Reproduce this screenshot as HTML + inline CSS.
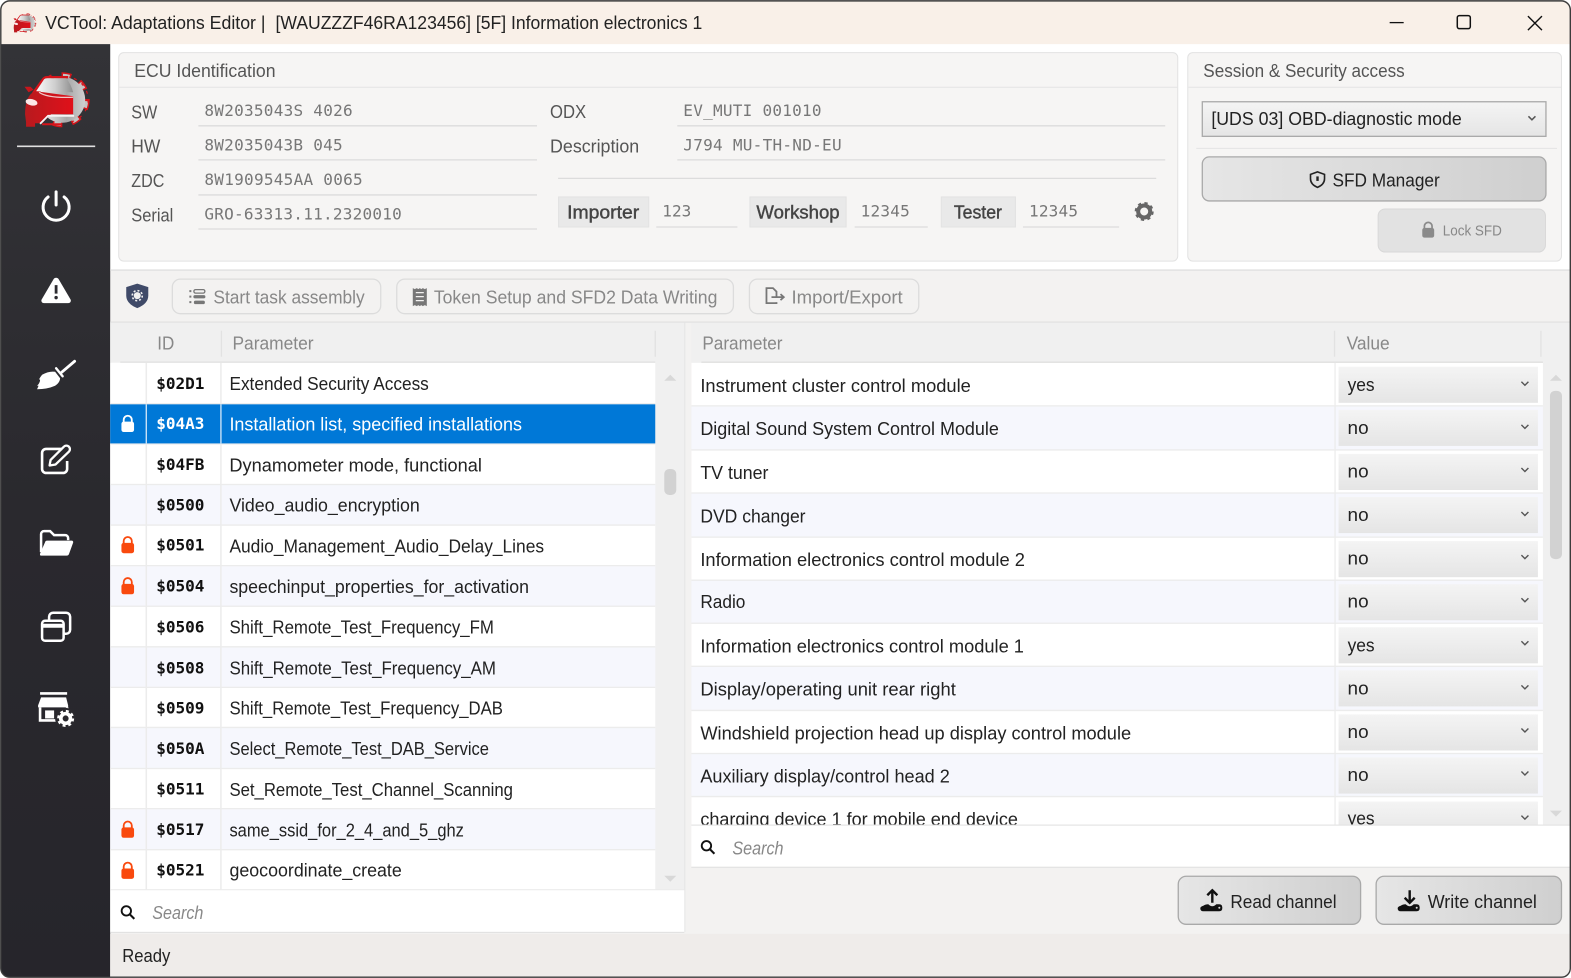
<!DOCTYPE html>
<html lang="en"><head><meta charset="utf-8"><title>VCTool: Adaptations Editor</title>
<style>
html,body{margin:0;padding:0;background:#fff;width:1571px;height:978px;overflow:hidden}
svg{display:block}
text{font-family:"Liberation Sans",sans-serif;font-size:18px;fill:#222;white-space:pre}
.l{fill:#555}
.m{font-family:"DejaVu Sans Mono","Liberation Mono",monospace;font-size:16px;fill:#777}
.i{font-family:"DejaVu Sans Mono","Liberation Mono",monospace;font-size:16px;font-weight:bold;fill:#111}
.g{fill:#888}
.s{fill:#888;font-style:italic}
.b{fill:#444;font-weight:normal;stroke:#444;stroke-width:.4}
</style></head><body>
<svg xmlns="http://www.w3.org/2000/svg" width="1571" height="978" viewBox="0 0 1568 976">
<defs>
<linearGradient id="cb" x1="0" y1="0" x2="0" y2="1"><stop offset="0" stop-color="#f4f4f4"/><stop offset="1" stop-color="#e5e5e5"/></linearGradient>
<linearGradient id="bt" x1="0" y1="0" x2="1" y2="0"><stop offset="0" stop-color="#e6e6e6"/><stop offset="1" stop-color="#cfcfcf"/></linearGradient>
<linearGradient id="sd" x1="0" y1="0" x2="0" y2="1"><stop offset="0" stop-color="#333337"/><stop offset=".5" stop-color="#2a292e"/><stop offset="1" stop-color="#26252b"/></linearGradient>
<linearGradient id="sv" x1="0" y1="0" x2="1" y2="0"><stop offset="0" stop-color="#f8f8f8"/><stop offset=".6" stop-color="#a8a8a8"/><stop offset="1" stop-color="#d0d0d0"/></linearGradient>
<linearGradient id="sw" x1="0" y1="0" x2="1" y2="0"><stop offset="0" stop-color="#fafafa"/><stop offset=".5" stop-color="#d0d0d0"/><stop offset="1" stop-color="#8e8e8e"/></linearGradient>
<linearGradient id="rd" x1="0" y1="0" x2="1" y2="0"><stop offset="0" stop-color="#b81a1e"/><stop offset="1" stop-color="#e0101a"/></linearGradient>
<symbol id="logo" viewBox="23 72 66 56" overflow="visible">
<circle cx="62" cy="99.500" r="24" fill="none" stroke="#d5141a" stroke-width="7" pathLength="80" stroke-dasharray="5 5"/>
<circle cx="62" cy="99.500" r="24" fill="none" stroke="#c4c4c4" stroke-width="4" pathLength="80" stroke-dasharray="3.500 6.500" stroke-dashoffset="-0.750"/>
<circle cx="62" cy="99.500" r="23" fill="url(#sv)"/>
<path d="M65 76.500a23 23 0 0 1 0 46" fill="none" stroke="#d5141a" stroke-width="1.200" stroke-dasharray="3 6"/>
<path d="M33 93L43 79q1.500-2 4-2H68" fill="none" stroke="#d5141a" stroke-width="2.400"/>
<path d="M36 91l8-12q1-1 3-1H66q5 6 7 14z" fill="url(#sw)"/>
<path d="M27 100q3-8 9-9l37 5V114H51l-9 9H35v3.500H26V122l-1-8q0-8 2-14z" fill="url(#rd)"/>
<path d="M39 92q8 6 34 5" fill="none" stroke="#f0c8c8" stroke-width="1.300"/>
<path d="M24.500 86.500h6l3 3-5 2.500z" fill="#c8161c"/>
<path d="M40 123.500l8-8H74" fill="none" stroke="#f5f5f5" stroke-width="1.800"/>
<ellipse cx="31.500" cy="102" rx="6" ry="3.200" transform="rotate(12 31.500 102)" fill="#fde8e8"/>
<path d="M42 124H62" stroke="#d5141a" stroke-width="2"/>
</symbol>
<symbol id="lock" viewBox="0 0 16 20" overflow="visible"><path d="M3.500 8V5.500a4.500 4.500 0 0 1 9 0V8" fill="none" stroke="currentColor" stroke-width="2"/><rect x="1" y="7.500" width="14" height="11.500" rx="2.500" fill="currentColor"/></symbol>
<symbol id="mag" viewBox="0 0 16 16" overflow="visible"><circle cx="6.500" cy="6.500" r="5" fill="none" stroke="#111" stroke-width="2"/><path d="M10.500 10.500l4.500 4.500" stroke="#111" stroke-width="2.200"/></symbol>
<clipPath id="rc"><rect x="690" y="362" width="878" height="461"/></clipPath>
</defs>

<!-- window -->
<rect x="0" y="0" width="1568" height="976" rx="9" fill="#f3f2f1"/>
<path d="M1 44V9a8 8 0 0 1 8-8H1559a8 8 0 0 1 8 8V44z" fill="#f9f0e8"/>
<rect x="110" y="44" width="1458" height="225" fill="#fff"/>
<path d="M1 44H110V975H9a8 8 0 0 1-8-8z" fill="url(#sd)"/>

<!-- title -->
<use href="#logo" x="13" y="13" width="23" height="20"/>
<text x="45" y="29" textLength="220" lengthAdjust="spacingAndGlyphs">VCTool: Adaptations Editor |</text>
<text x="275" y="29" textLength="426" lengthAdjust="spacingAndGlyphs">[WAUZZZF46RA123456] [5F] Information electronics 1</text>
<path d="M1387 22.500h14" stroke="#111" stroke-width="1.300"/>
<rect x="1454.500" y="15.500" width="13" height="13" rx="2" fill="none" stroke="#111" stroke-width="1.500"/>
<path d="M1525 16l14 14M1539 16l-14 14" stroke="#111" stroke-width="1.400"/>

<!-- ECU group -->
<rect x="118.500" y="52.500" width="1057" height="208" rx="5" fill="#f6f5f4" stroke="#e2e2e2"/>
<path d="M119 87H1175" stroke="#e3e3e3"/>
<text class="l" x="134" y="76.700" textLength="141" lengthAdjust="spacingAndGlyphs">ECU Identification</text>
<text class="l" x="131" y="118" textLength="26" lengthAdjust="spacingAndGlyphs">SW</text>
<text class="l" x="131" y="152" textLength="29" lengthAdjust="spacingAndGlyphs">HW</text>
<text class="l" x="131" y="186.500" textLength="33" lengthAdjust="spacingAndGlyphs">ZDC</text>
<text class="l" x="131" y="221" textLength="42" lengthAdjust="spacingAndGlyphs">Serial</text>
<text class="m" x="204" y="115.500" textLength="148">8W2035043S 4026</text>
<text class="m" x="204" y="150" textLength="138">8W2035043B 045</text>
<text class="m" x="204" y="184.500" textLength="158">8W1909545AA 0065</text>
<text class="m" x="204" y="219" textLength="197">GRO-63313.11.2320010</text>
<path d="M198 125.500H536M198 159.500H536M198 194.500H536M198 228.500H536M676 125.500H1163M676 159.500H1163M557 178H1154" stroke="#dcdcdc" stroke-width="1.300"/>
<text class="l" x="549" y="117.700" textLength="36" lengthAdjust="spacingAndGlyphs">ODX</text>
<text class="l" x="549" y="152.300" textLength="89" lengthAdjust="spacingAndGlyphs">Description</text>
<text class="m" x="682" y="115.500" textLength="138">EV_MUTI 001010</text>
<text class="m" x="682" y="150" textLength="158">J794 MU-TH-ND-EU</text>
<rect x="557.500" y="196.500" width="90" height="30" fill="#e9e9e9" stroke="#e2e2e2"/>
<rect x="748.500" y="196.500" width="96" height="30" fill="#e9e9e9" stroke="#e2e2e2"/>
<rect x="939.500" y="196.500" width="74" height="30" fill="#e9e9e9" stroke="#e2e2e2"/>
<text class="b" x="566" y="218" textLength="72" lengthAdjust="spacingAndGlyphs">Importer</text>
<text class="b" x="755" y="218" textLength="83" lengthAdjust="spacingAndGlyphs">Workshop</text>
<text class="b" x="952" y="218" textLength="48" lengthAdjust="spacingAndGlyphs">Tester</text>
<text class="m" x="661" y="216" textLength="29">123</text>
<text class="m" x="859" y="216" textLength="49">12345</text>
<text class="m" x="1027" y="216" textLength="49">12345</text>
<path d="M655 226.500H736M853 226.500H926M1021 226.500H1117" stroke="#dcdcdc" stroke-width="1.300"/>
<g transform="translate(1142 211)"><circle r="6" fill="none" stroke="#666" stroke-width="4"/><circle r="8" fill="none" stroke="#666" stroke-width="3" stroke-dasharray="3.100 3.180"/></g>

<!-- Session group -->
<rect x="1185.500" y="52.500" width="373" height="208" rx="5" fill="#f6f5f4" stroke="#e2e2e2"/>
<path d="M1186 87H1558M1194 148H1554" stroke="#e3e3e3"/>
<text class="l" x="1201" y="76.700" textLength="201" lengthAdjust="spacingAndGlyphs">Session &amp; Security access</text>
<rect x="1200" y="101.500" width="343" height="34.500" fill="url(#cb)" stroke="#a9a9a9" stroke-width="1.300"/>
<text x="1209" y="124.700" textLength="250" lengthAdjust="spacingAndGlyphs">[UDS 03] OBD-diagnostic mode</text>
<path d="M1525.500 116l3.500 3.500 3.500-3.500" fill="none" stroke="#555" stroke-width="1.500"/>
<rect x="1200" y="156.500" width="343" height="44" rx="7" fill="url(#bt)" stroke="#a9a9a9" stroke-width="1.300"/>
<path d="M1315 171.500l7 2.500v4.500q0 5.500-7 8.500q-7-3-7-8.500V174z" fill="none" stroke="#222" stroke-width="1.600"/><path d="M1315 176v4.500" stroke="#222" stroke-width="2.400"/>
<text x="1330" y="186" textLength="107" lengthAdjust="spacingAndGlyphs">SFD Manager</text>
<rect x="1375.500" y="208.500" width="167" height="43" rx="7" fill="#e2e2e2" stroke="#d8d8d8"/>
<use href="#lock" x="1418.500" y="221" width="14" height="17" color="#8a8a8a"/>
<text class="g" x="1440" y="235" style="font-size:15px" textLength="59" lengthAdjust="spacingAndGlyphs">Lock SFD</text>

<!-- toolbar -->
<path d="M110 269.500H1568M110 321.500H1568" stroke="#e0e0e0" stroke-width="1.300"/>
<path d="M137 283l11 3.500v8.500q0 8-11 12.500q-11-4.500-11-12.500v-8.500z" fill="#3f4a68"/>
<circle cx="137" cy="295" r="3.500" fill="#f1f1f1"/><circle cx="137" cy="295" r="5" fill="none" stroke="#f1f1f1" stroke-width="1.600" stroke-dasharray="2 1.930"/>
<rect x="172" y="278.500" width="208" height="34.500" rx="8" fill="#f3f2f1" stroke="#dcdcdc" stroke-width="1.300"/>
<rect x="396" y="278.500" width="336" height="34.500" rx="8" fill="#f3f2f1" stroke="#dcdcdc" stroke-width="1.300"/>
<rect x="748" y="278.500" width="169" height="34.500" rx="8" fill="#f3f2f1" stroke="#dcdcdc" stroke-width="1.300"/>
<path d="M189 290.500h2M189 296h2M189 301.500h2" stroke="#777" stroke-width="2"/><rect x="193.500" y="289" width="11" height="3.500" rx="1.700" fill="none" stroke="#777" stroke-width="1.300"/><rect x="193" y="294.500" width="12" height="3.200" rx="1.600" fill="#777"/><rect x="193.500" y="300" width="11" height="3.500" rx="1.700" fill="#777"/>
<text class="g" x="213" y="303" textLength="151" lengthAdjust="spacingAndGlyphs">Start task assembly</text>
<path d="M412 287.500l2 1 2-1 1.500 1 1.500-1 1.500 1 1.500-1 2 1 2-1v18l-2-1-2 1-1.500-1-1.500 1-1.500-1-1.500 1-2-1-2 1z" fill="#777"/><path d="M415 292h8M415 296h8M415 300h8" stroke="#f3f2f1" stroke-width="1.300"/>
<text class="g" x="433" y="303" textLength="283" lengthAdjust="spacingAndGlyphs">Token Setup and SFD2 Data Writing</text>
<path d="M775 297v-6l-3.500-3.500H765v15h10v-1" fill="none" stroke="#777" stroke-width="1.800"/><path d="M770 296.500h12m-3-3l3.300 3-3.300 3" fill="none" stroke="#777" stroke-width="1.800"/>
<text class="g" x="790" y="303" textLength="111" lengthAdjust="spacingAndGlyphs">Import/Export</text>

<!-- left table -->
<rect x="110" y="322" width="573" height="40" fill="#f0f0f0"/>
<rect x="654" y="362" width="29" height="526" fill="#f0f0f0"/>
<rect x="683" y="322" width="7" height="610" fill="#f3f2f1"/>
<path d="M683.500 322V930" stroke="#e4e4e4"/>
<path d="M120 361.500H654" stroke="#ddd" stroke-width="1.300"/><path d="M221 330V356M654 330V356" stroke="#e2e2e2" stroke-width="1.300"/>
<text class="g" x="157" y="349" textLength="17" lengthAdjust="spacingAndGlyphs">ID</text>
<text class="g" x="232" y="349" textLength="81" lengthAdjust="spacingAndGlyphs">Parameter</text>

<rect x="110" y="362" width="544" height="41" fill="#fff"/>
<rect x="110" y="443" width="544" height="40.500" fill="#fff"/>
<rect x="110" y="483.500" width="544" height="40.500" fill="#f6f7fd"/>
<rect x="110" y="524" width="544" height="40.500" fill="#fff"/>
<rect x="110" y="564.500" width="544" height="40.500" fill="#f6f7fd"/>
<rect x="110" y="605" width="544" height="40.500" fill="#fff"/>
<rect x="110" y="645.500" width="544" height="40.500" fill="#f6f7fd"/>
<rect x="110" y="686" width="544" height="40" fill="#fff"/>
<rect x="110" y="726" width="544" height="41" fill="#f6f7fd"/>
<rect x="110" y="767" width="544" height="40" fill="#fff"/>
<rect x="110" y="807" width="544" height="41" fill="#f6f7fd"/>
<rect x="110" y="848" width="544" height="40" fill="#fff"/>
<path d="M110 403H654M110 443H654M110 483.500H654M110 524H654M110 564.500H654M110 605H654M110 645.500H654M110 686H654M110 726H654M110 767H654M110 807H654M110 848H654M110 888H683" stroke="#ececec" stroke-width="1.300"/>
<path d="M146 362V888M220.500 362V888" stroke="#ececec" stroke-width="1.500"/>
<rect x="110" y="403.500" width="544" height="39" fill="#0078d7"/>
<path d="M146 403.500V442.500M220.500 403.500V442.500" stroke="#d5e8f8" stroke-width="1.300"/>

<g>
<text class="i" x="156" y="388" textLength="48">$02D1</text><text x="229" y="389" textLength="199" lengthAdjust="spacingAndGlyphs">Extended Security Access</text>
<text class="i" x="156" y="428" textLength="48" style="fill:#fff">$04A3</text><text x="229" y="429.500" textLength="292" lengthAdjust="spacingAndGlyphs" style="fill:#fff">Installation list, specified installations</text>
<text class="i" x="156" y="469" textLength="48">$04FB</text><text x="229" y="470.500" textLength="252" lengthAdjust="spacingAndGlyphs">Dynamometer mode, functional</text>
<text class="i" x="156" y="509.500" textLength="48">$0500</text><text x="229" y="510.700" textLength="190" lengthAdjust="spacingAndGlyphs">Video_audio_encryption</text>
<text class="i" x="156" y="549.500" textLength="48">$0501</text><text x="229" y="551.500" textLength="314" lengthAdjust="spacingAndGlyphs">Audio_Management_Audio_Delay_Lines</text>
<text class="i" x="156" y="590.500" textLength="48">$0504</text><text x="229" y="591.700" textLength="299" lengthAdjust="spacingAndGlyphs">speechinput_properties_for_activation</text>
<text class="i" x="156" y="631" textLength="48">$0506</text><text x="229" y="632" textLength="264" lengthAdjust="spacingAndGlyphs">Shift_Remote_Test_Frequency_FM</text>
<text class="i" x="156" y="672" textLength="48">$0508</text><text x="229" y="673" textLength="266" lengthAdjust="spacingAndGlyphs">Shift_Remote_Test_Frequency_AM</text>
<text class="i" x="156" y="712" textLength="48">$0509</text><text x="229" y="713.300" textLength="273" lengthAdjust="spacingAndGlyphs">Shift_Remote_Test_Frequency_DAB</text>
<text class="i" x="156" y="752.500" textLength="48">$050A</text><text x="229" y="753.700" textLength="259" lengthAdjust="spacingAndGlyphs">Select_Remote_Test_DAB_Service</text>
<text class="i" x="156" y="793" textLength="48">$0511</text><text x="229" y="794.300" textLength="283" lengthAdjust="spacingAndGlyphs">Set_Remote_Test_Channel_Scanning</text>
<text class="i" x="156" y="833.500" textLength="48">$0517</text><text x="229" y="834.700" textLength="234" lengthAdjust="spacingAndGlyphs">same_ssid_for_2_4_and_5_ghz</text>
<text class="i" x="156" y="874" textLength="48">$0521</text><text x="229" y="875" textLength="172" lengthAdjust="spacingAndGlyphs">geocoordinate_create</text>
</g>
<use href="#lock" x="120" y="414" width="15" height="18" color="#fff"/>
<use href="#lock" x="120" y="535" width="15" height="18" color="#f9490e"/>
<use href="#lock" x="120" y="576" width="15" height="18" color="#f9490e"/>
<use href="#lock" x="120" y="819" width="15" height="18" color="#f9490e"/>
<use href="#lock" x="120" y="860" width="15" height="18" color="#f9490e"/>
<path d="M663 380l6-6 6 6z" fill="#d8d8d8"/><path d="M663 874l6 6 6-6z" fill="#d8d8d8"/>
<rect x="663" y="468" width="12" height="26" rx="5" fill="#d2d2d2"/>
<rect x="110" y="888.500" width="573" height="41.500" fill="#fff"/>
<path d="M110 930.500H683" stroke="#e0e0e0"/>
<use href="#mag" x="120" y="903" width="15" height="15"/>
<text class="s" x="152" y="917" textLength="51" lengthAdjust="spacingAndGlyphs">Search</text>

<!-- right table -->
<rect x="690" y="322" width="878" height="40" fill="#f0f0f0"/>
<rect x="1540" y="362" width="28" height="461" fill="#f0f0f0"/>
<path d="M700 361.500H1540" stroke="#ddd" stroke-width="1.300"/><path d="M1332 330V356M1538 330V356" stroke="#e2e2e2" stroke-width="1.300"/>
<text class="g" x="701" y="349" textLength="80" lengthAdjust="spacingAndGlyphs">Parameter</text>
<text class="g" x="1344" y="349" textLength="43" lengthAdjust="spacingAndGlyphs">Value</text>
<g clip-path="url(#rc)">
<rect x="690" y="362" width="850" height="43" fill="#fff"/>
<rect x="690" y="405" width="850" height="44" fill="#f6f7fd"/>
<rect x="690" y="449" width="850" height="43" fill="#fff"/>
<rect x="690" y="492" width="850" height="44" fill="#f6f7fd"/>
<rect x="690" y="536" width="850" height="43" fill="#fff"/>
<rect x="690" y="579" width="850" height="43" fill="#f6f7fd"/>
<rect x="690" y="622" width="850" height="43" fill="#fff"/>
<rect x="690" y="665" width="850" height="44" fill="#f6f7fd"/>
<rect x="690" y="709" width="850" height="43" fill="#fff"/>
<rect x="690" y="752" width="850" height="43" fill="#f6f7fd"/>
<rect x="690" y="795" width="850" height="44" fill="#fff"/>
<path d="M690 405H1540M690 449H1540M690 492H1540M690 536H1540M690 579H1540M690 622H1540M690 665H1540M690 709H1540M690 752H1540M690 795H1540M1332.500 362V823" stroke="#ececec" stroke-width="1.300"/>
<rect x="1336" y="366" width="199" height="36" fill="url(#cb)"/>
<rect x="1336" y="409" width="199" height="36" fill="url(#cb)"/>
<rect x="1336" y="453" width="199" height="36" fill="url(#cb)"/>
<rect x="1336" y="496" width="199" height="36" fill="url(#cb)"/>
<rect x="1336" y="540" width="199" height="36" fill="url(#cb)"/>
<rect x="1336" y="583" width="199" height="36" fill="url(#cb)"/>
<rect x="1336" y="626" width="199" height="36" fill="url(#cb)"/>
<rect x="1336" y="669" width="199" height="36" fill="url(#cb)"/>
<rect x="1336" y="713" width="199" height="36" fill="url(#cb)"/>
<rect x="1336" y="756" width="199" height="36" fill="url(#cb)"/>
<rect x="1336" y="800" width="199" height="36" fill="url(#cb)"/>
<path d="M1518.500 381l3.500 3.500 3.500-3.500M1518.500 424l3.500 3.500 3.500-3.500M1518.500 467l3.500 3.500 3.500-3.500M1518.500 511l3.500 3.500 3.500-3.500M1518.500 554l3.500 3.500 3.500-3.500M1518.500 597l3.500 3.500 3.500-3.500M1518.500 640l3.500 3.500 3.500-3.500M1518.500 684l3.500 3.500 3.500-3.500M1518.500 727l3.500 3.500 3.500-3.500M1518.500 770l3.500 3.500 3.500-3.500M1518.500 814l3.500 3.500 3.500-3.500" fill="none" stroke="#555" stroke-width="1.400"/>
<text x="699" y="391" textLength="270" lengthAdjust="spacingAndGlyphs">Instrument cluster control module</text>
<text x="699" y="434" textLength="298" lengthAdjust="spacingAndGlyphs">Digital Sound System Control Module</text>
<text x="699" y="478" textLength="68" lengthAdjust="spacingAndGlyphs">TV tuner</text>
<text x="699" y="521.300" textLength="105" lengthAdjust="spacingAndGlyphs">DVD changer</text>
<text x="699" y="565" textLength="324" lengthAdjust="spacingAndGlyphs">Information electronics control module 2</text>
<text x="699" y="607" textLength="45" lengthAdjust="spacingAndGlyphs">Radio</text>
<text x="699" y="651" textLength="323" lengthAdjust="spacingAndGlyphs">Information electronics control module 1</text>
<text x="699" y="694" textLength="255" lengthAdjust="spacingAndGlyphs">Display/operating unit rear right</text>
<text x="699" y="738" textLength="430" lengthAdjust="spacingAndGlyphs">Windshield projection head up display control module</text>
<text x="699" y="781" textLength="249" lengthAdjust="spacingAndGlyphs">Auxiliary display/control head 2</text>
<text x="699" y="824" textLength="317" lengthAdjust="spacingAndGlyphs">charging device 1 for mobile end device</text>
<text x="1345" y="390" textLength="27" lengthAdjust="spacingAndGlyphs">yes</text>
<text x="1345" y="433" textLength="21" lengthAdjust="spacingAndGlyphs">no</text>
<text x="1345" y="476.500" textLength="21" lengthAdjust="spacingAndGlyphs">no</text>
<text x="1345" y="520" textLength="21" lengthAdjust="spacingAndGlyphs">no</text>
<text x="1345" y="563.500" textLength="21" lengthAdjust="spacingAndGlyphs">no</text>
<text x="1345" y="606.500" textLength="21" lengthAdjust="spacingAndGlyphs">no</text>
<text x="1345" y="650" textLength="27" lengthAdjust="spacingAndGlyphs">yes</text>
<text x="1345" y="693" textLength="21" lengthAdjust="spacingAndGlyphs">no</text>
<text x="1345" y="736.500" textLength="21" lengthAdjust="spacingAndGlyphs">no</text>
<text x="1345" y="779.500" textLength="21" lengthAdjust="spacingAndGlyphs">no</text>
<text x="1345" y="823" textLength="27" lengthAdjust="spacingAndGlyphs">yes</text>
</g>
<path d="M1547 380l6-6 6 6z" fill="#d8d8d8"/><path d="M1547 809l6 6 6-6z" fill="#d8d8d8"/>
<rect x="1547" y="390" width="12" height="168" rx="5" fill="#d2d2d2"/>
<rect x="690" y="823.500" width="878" height="41.500" fill="#fff"/>
<path d="M690 823.500H1568M690 865.500H1568" stroke="#e0e0e0"/>
<use href="#mag" x="699" y="838" width="15" height="15"/>
<text class="s" x="731" y="852.700" textLength="51" lengthAdjust="spacingAndGlyphs">Search</text>

<!-- bottom buttons -->
<rect x="1176" y="874.500" width="182" height="48" rx="8" fill="url(#bt)" stroke="#a9a9a9" stroke-width="1.300"/>
<rect x="1373.500" y="874.500" width="185" height="48" rx="8" fill="url(#bt)" stroke="#a9a9a9" stroke-width="1.300"/>
<path d="M1210 901v-12m-5 4.500l5-5 5 5" fill="none" stroke="#111" stroke-width="2.400"/>
<path d="M1201 904q2-1.500 5-1.500 2 2 4 2t4-2h3q3 0 3 3.500t-3 3.500h-16q-3 0-3-3 0-1.500 3-2.500z" fill="#111"/><circle cx="1217" cy="906" r="1" fill="#ddd"/>
<text x="1228" y="906" textLength="106" lengthAdjust="spacingAndGlyphs">Read channel</text>
<path d="M1407 888.500v12m-5-4.500l5 5 5-5" fill="none" stroke="#111" stroke-width="2.400"/>
<path d="M1398 904q2-1.500 5-1.500 2 2 4 2t4-2h3q3 0 3 3.500t-3 3.500h-16q-3 0-3-3 0-1.500 3-2.500z" fill="#111"/><circle cx="1414" cy="906" r="1" fill="#ddd"/>
<text x="1425" y="906" textLength="109" lengthAdjust="spacingAndGlyphs">Write channel</text>

<!-- status -->
<path d="M110 932H1567V967a8 8 0 0 1-8 8H110z" fill="#efecea"/>
<text x="122" y="960" textLength="48" lengthAdjust="spacingAndGlyphs">Ready</text>

<!-- sidebar -->
<use href="#logo" x="23" y="72" width="66" height="56"/>
<path d="M17 146H95" stroke="#e0e0e0" stroke-width="1.600"/>
<g fill="none" stroke="#fff" stroke-linecap="round">
<path d="M48 196.500a13 13 0 1 0 16 0" stroke-width="3"/><path d="M56 191.500v13" stroke-width="3"/>
</g>
<path d="M53.500 278.500a3 3 0 0 1 5 0l12 20.500a2.500 2.500 0 0 1-2.500 3.500H44a2.500 2.500 0 0 1-2.500-3.500z" fill="#fff"/>
<path d="M56 284.500v8.500" stroke="#2c2b30" stroke-width="2.800"/><circle cx="56" cy="297" r="1.700" fill="#2c2b30"/>
<path d="M74.500 360.500l-13 11" stroke="#fff" stroke-width="2.800" stroke-linecap="round"/>
<path d="M56 367.500l6.500 8" stroke="#fff" stroke-width="2.400" stroke-linecap="round"/>
<path d="M42 374q7-4 13-3l5 6.500q0 4-5 7.500-8 3.500-18 3.500l1.500-3.500-1.500 0q3-3 3-6l-1-.5q1-2 3-4.500z" fill="#fff"/>
<path d="M62 448H46a4 4 0 0 0-4 4v16a4 4 0 0 0 4 4h17a4 4 0 0 0 4-4v-8" fill="none" stroke="#fff" stroke-width="2.600"/>
<path d="M49.500 464.500l1-5.500 13-13a2.800 2.800 0 0 1 5.500 4.500l-13.500 13z" fill="none" stroke="#fff" stroke-width="2.300" stroke-linejoin="round"/>
<path d="M41 551V533a3 3 0 0 1 3-3h6l4 4h11a3 3 0 0 1 3 3v2" fill="none" stroke="#fff" stroke-width="2.500"/>
<path d="M45 541a2 2 0 0 1 2-1.500h24.500a1.500 1.500 0 0 1 1.500 2l-4 11q-.5 2-2.500 2H41q-1.500 0-1-2z" fill="#fff"/>
<rect x="42" y="619.500" width="21.500" height="20" rx="3" fill="none" stroke="#fff" stroke-width="2.500"/><path d="M42 624.500H63.500" stroke="#fff" stroke-width="4"/>
<path d="M49 618.500v-3a4 4 0 0 1 4-4h13a4 4 0 0 1 4 4v13a4 4 0 0 1-4 4h-2" fill="none" stroke="#fff" stroke-width="2.500"/>
<path d="M40 692H67" stroke="#fff" stroke-width="2.600"/>
<path d="M41 696H66l2 8v2H38v-2z" fill="#fff"/>
<path d="M40 706v13H58M67 706v3" fill="none" stroke="#fff" stroke-width="2.600"/>
<rect x="45" y="709" width="9" height="8" fill="#fff"/>
<circle cx="65.500" cy="717" r="10.500" fill="#2a292e"/>
<g transform="translate(65.500 717)"><circle r="4.800" fill="none" stroke="#fff" stroke-width="3.600"/><circle r="7" fill="none" stroke="#fff" stroke-width="3" stroke-dasharray="2.800 2.700"/></g>

<!-- frame -->
<rect x="0.800" y="0.800" width="1566.500" height="974.500" rx="9" fill="none" stroke="#3c3c3c" stroke-width="1.400"/>
</svg>
</body></html>
